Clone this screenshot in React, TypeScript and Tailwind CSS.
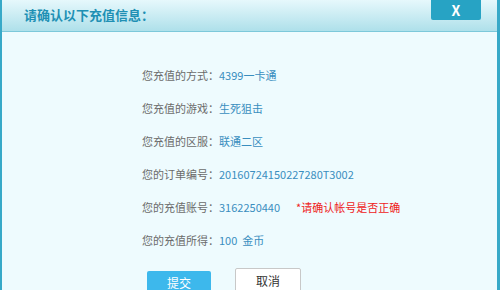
const rows = [
  { label: "您充值的方式：", value: "4399一卡通" },
  { label: "您充值的游戏：", value: "生死狙击" },
  { label: "您充值的区服：", value: "联通二区" },
  { label: "您的订单编号：", value: "20160724150227280T3002" },
  { label: "您的充值账号：", value: "3162250440", note: "*请确认帐号是否正确" },
  { label: "您的充值所得：", value: "100  金币" },
];

export default function App() {
  return (
    <div
      className="w-[500px] h-[290px] overflow-hidden bg-[#eefbfe] border-l-2 border-r-[3px] border-[#37a9c8] flex flex-col"
      style={{ fontFamily: '"Noto Sans CJK SC", "Noto Sans", sans-serif' }}
    >
      {/* Header */}
      <div className="h-[32px] shrink-0 bg-gradient-to-b from-[#e6f8fc] to-[#aee0ea] border-b border-[#7cc8da] flex items-start justify-between pl-[22px] pr-[16px]">
        <h1 className="mt-[5px] text-[13px] font-bold text-[#2090b4] leading-[20px]">请确认以下充值信息：</h1>
        <button className="w-[50px] h-[20px] rounded-b-[2px] bg-[#27a3c4] text-white font-bold text-[14px] leading-[20px] flex items-center justify-center">
          X
        </button>
      </div>

      {/* Info rows */}
      <div className="flex flex-col pl-[140px] pt-[34px] gap-[15px]">
        {rows.map((row) => (
          <div key={row.label} className="flex items-center h-[18px] text-[11px]">
            <span className="w-[77px] text-[#6b6b6b]">{row.label}</span>
            <span className="text-[#3a8ebf] whitespace-pre">{row.value}</span>
            {row.note && <span className="ml-[16px] text-[#ee2222] text-[11px]">{row.note}</span>}
          </div>
        ))}
      </div>

      {/* Buttons */}
      <div className="flex pl-[145px] pt-[19px] gap-[24px] items-start">
        <button className="w-[64px] h-[24px] mt-[3px] bg-[#3db8ec] text-white text-[12px] rounded-[2px]">提交</button>
        <button className="w-[66px] h-[26px] bg-white border border-[#c8c8c8] text-[#333] text-[12px] rounded-[2px]">取消</button>
      </div>
    </div>
  );
}
